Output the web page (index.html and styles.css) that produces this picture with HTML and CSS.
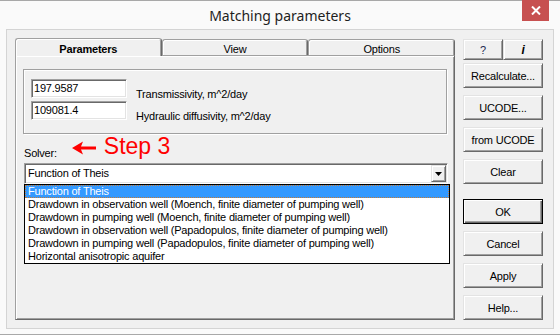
FILE: index.html
```html
<!DOCTYPE html>
<html lang="en">
<head>
    <meta charset="UTF-8">
    <title>Matching parameters</title>
    <link rel="stylesheet" href="styles.css">
</head>
<body>
    <div class="window">
        <div class="titlebar">
            <span></span>
            <div class="title">Matching parameters</div>
            <div class="close">
                <svg width="10" height="9" viewBox="0 0 10 9"><path d="M1 0.5 L9 8.5 M9 0.5 L1 8.5" stroke="#fff" stroke-width="2"/></svg>
            </div>
        </div>

        <div class="client">
            <div class="pages">
                <div class="tabs">
                    <div class="tab active">Parameters</div>
                    <div class="tab">View</div>
                    <div class="tab">Options</div>
                </div>
                <div class="sheet">
                    <div class="group">
                        <div class="field">
                            <div class="edit">197.9587</div>
                            <label>Transmissivity, m^2/day</label>
                        </div>
                        <div class="field">
                            <div class="edit">109081.4</div>
                            <label>Hydraulic diffusivity, m^2/day</label>
                        </div>
                    </div>

                    <div class="solver-row">
                        <span class="solver">Solver:</span>
                        <svg class="arrow" width="24" height="14" viewBox="0 0 24 14"><path d="M0 7 L11 0.5 L9 5.5 L24 5.5 L24 8.5 L9 8.5 L11 13.5 Z" fill="#f00"/></svg>
                        <span class="step">Step 3</span>
                    </div>

                    <div class="combo">
                        <span class="combo-text">Function of Theis</span>
                        <div class="drop">
                            <svg width="7" height="4" viewBox="0 0 7 4"><path d="M0 0 L7 0 L3.5 4 Z" fill="#000"/></svg>
                        </div>
                    </div>
                    <ul class="list">
                        <li class="sel">Function of Theis</li>
                        <li>Drawdown in observation well (Moench, finite diameter of pumping well)</li>
                        <li>Drawdown in pumping well (Moench, finite diameter of pumping well)</li>
                        <li>Drawdown in observation well (Papadopulos, finite diameter of pumping well)</li>
                        <li>Drawdown in pumping well (Papadopulos, finite diameter of pumping well)</li>
                        <li>Horizontal anisotropic aquifer</li>
                    </ul>
                </div>
            </div>

            <div class="buttons">
                <div class="help-row">
                    <button class="q">?</button>
                    <button class="info">i</button>
                </div>
                <button class="btn first">Recalculate...</button>
                <button class="btn">UCODE...</button>
                <button class="btn">from UCODE</button>
                <button class="btn">Clear</button>
                <button class="btn ok">OK</button>
                <button class="btn">Cancel</button>
                <button class="btn">Apply</button>
                <button class="btn">Help...</button>
            </div>
        </div>
    </div>
</body>
</html>
```

FILE: styles.css
```css
* {
    margin: 0;
    padding: 0;
    box-sizing: border-box;
}

body {
    width: 560px;
    height: 335px;
    overflow: hidden;
    font-family: "Liberation Sans", Arial, sans-serif;
    font-size: 11px;
    letter-spacing: -0.2px;
    color: #000;
}

.window {
    height: 335px;
    background: #fafafa;
    border-top: 1px solid #a8a8a8;
    border-bottom: 1px solid #a8a8a8;
    padding-bottom: 5px;
    display: flex;
    flex-direction: column;
}

/* title bar */
.titlebar {
    height: 28px;
    display: grid;
    grid-template-columns: 1fr auto 1fr;
    align-items: start;
}

.title {
    font-family: "Noto Sans", sans-serif;
    font-size: 14px;
    letter-spacing: 0;
    color: #1e1e1e;
    padding-top: 5px;
}

.close {
    justify-self: end;
    margin: -1px 11px 0 0;
    width: 27px;
    height: 21px;
    background: #c75050;
    display: flex;
    align-items: center;
    justify-content: center;
}

/* dialog body */
.client {
    height: 300px;
    margin: 0 6px;
    border: 1px solid #d4d4d4;
    background: #f0f0f0;
    display: flex;
    gap: 8px;
    padding: 8px 10px 8px 8px;
}

.pages {
    width: 440px;
    display: flex;
    flex-direction: column;
}

.tabs {
    height: 17px;
    display: flex;
    align-items: flex-end;
}

.tab {
    flex: 1;
    height: 16px;
    border: 1px solid #a0a0a0;
    border-right-color: #696969;
    border-bottom: none;
    border-radius: 3px 3px 0 0;
    box-shadow: inset 1px 1px #fff, inset -1px 0 #a0a0a0;
    text-align: center;
    padding-top: 3px;
    line-height: 12px;
}

.tab.active {
    height: 18px;
    margin-bottom: -1px;
    position: relative;
    z-index: 1;
    background: #f0f0f0;
    font-weight: bold;
    padding-top: 4px;
    line-height: 13px;
}

.sheet {
    flex: 1;
    border: 1px solid;
    border-color: #a0a0a0 #696969 #696969 #a0a0a0;
    box-shadow: inset 1px 1px #fff, inset -1px -1px #a0a0a0;
    padding: 13px 7px 0;
}

.group {
    height: 65px;
    border: 1px solid #a0a0a0;
    box-shadow: inset 1px 1px #fff, 1px 1px #fff;
    padding: 9px 7px 0;
    display: flex;
    flex-direction: column;
    gap: 3px;
}

.field {
    display: flex;
    align-items: flex-end;
}

.field label {
    margin: 0 0 -3px 9px;
    line-height: 13px;
}

.edit {
    width: 96px;
    height: 19px;
    background: #fff;
    border: 1px solid;
    border-color: #a0a0a0 #fff #fff #a0a0a0;
    box-shadow: inset 1px 1px #696969, inset -1px -1px #e3e3e3;
    padding-left: 2px;
    line-height: 17px;
}

.solver-row {
    height: 24px;
    margin-top: 2px;
    padding-left: 1px;
    display: flex;
    align-items: flex-end;
}

.solver {
    line-height: 13px;
}

.arrow {
    margin: 0 0 5px 15px;
}

.step {
    margin: 0 0 2px 8px;
    font-size: 23px;
    line-height: 23px;
    letter-spacing: 0;
    color: #f00;
}

.combo {
    width: 424px;
    height: 21px;
    margin: 3px 0 0 1px;
    background: #fff;
    border: 1px solid;
    border-color: #a0a0a0 #fff #fff #a0a0a0;
    box-shadow: inset 1px 1px #696969, inset -1px -1px #e3e3e3;
    padding: 1px;
    display: flex;
    justify-content: space-between;
}

.combo-text {
    padding-left: 2px;
    line-height: 17px;
}

.drop {
    width: 15px;
    height: 17px;
    background: #f0f0f0;
    border: 1px solid;
    border-color: #e3e3e3 #696969 #696969 #e3e3e3;
    box-shadow: inset 1px 1px #fff, inset -1px -1px #a0a0a0;
    display: flex;
    align-items: center;
    justify-content: center;
}

.list {
    list-style: none;
    width: 426px;
    margin-left: 1px;
    background: #fff;
    border: 1px solid #000;
}

.list li {
    height: 13px;
    line-height: 13px;
    padding-left: 3px;
    white-space: nowrap;
}

.list li.sel {
    background: #3399ff;
    color: #fff;
    outline: 1px dotted #c27a36;
    outline-offset: -1px;
}

/* right column */
.buttons {
    width: 80px;
    padding-top: 1px;
    display: flex;
    flex-direction: column;
}

button {
    font: inherit;
    letter-spacing: inherit;
    color: #000;
    background: #f0f0f0;
    border: 1px solid;
    border-color: #e3e3e3 #696969 #696969 #e3e3e3;
    box-shadow: inset 1px 1px #fff, inset -1px -1px #a0a0a0;
}

.help-row {
    height: 21px;
    margin-bottom: 3px;
    display: flex;
}

.help-row button {
    flex: 1;
}

.q {
    color: #1a2a50;
}

.info {
    font-weight: bold;
    font-style: italic;
    font-size: 12px;
}

.btn {
    height: 25px;
    margin-top: 7px;
}

.btn.first {
    margin-top: 0;
}

.btn.ok {
    margin-top: 15px;
    border-color: #000;
    box-shadow: inset 1px 1px #fff, inset -1px -1px #696969, inset -2px -2px #a0a0a0;
}
```
